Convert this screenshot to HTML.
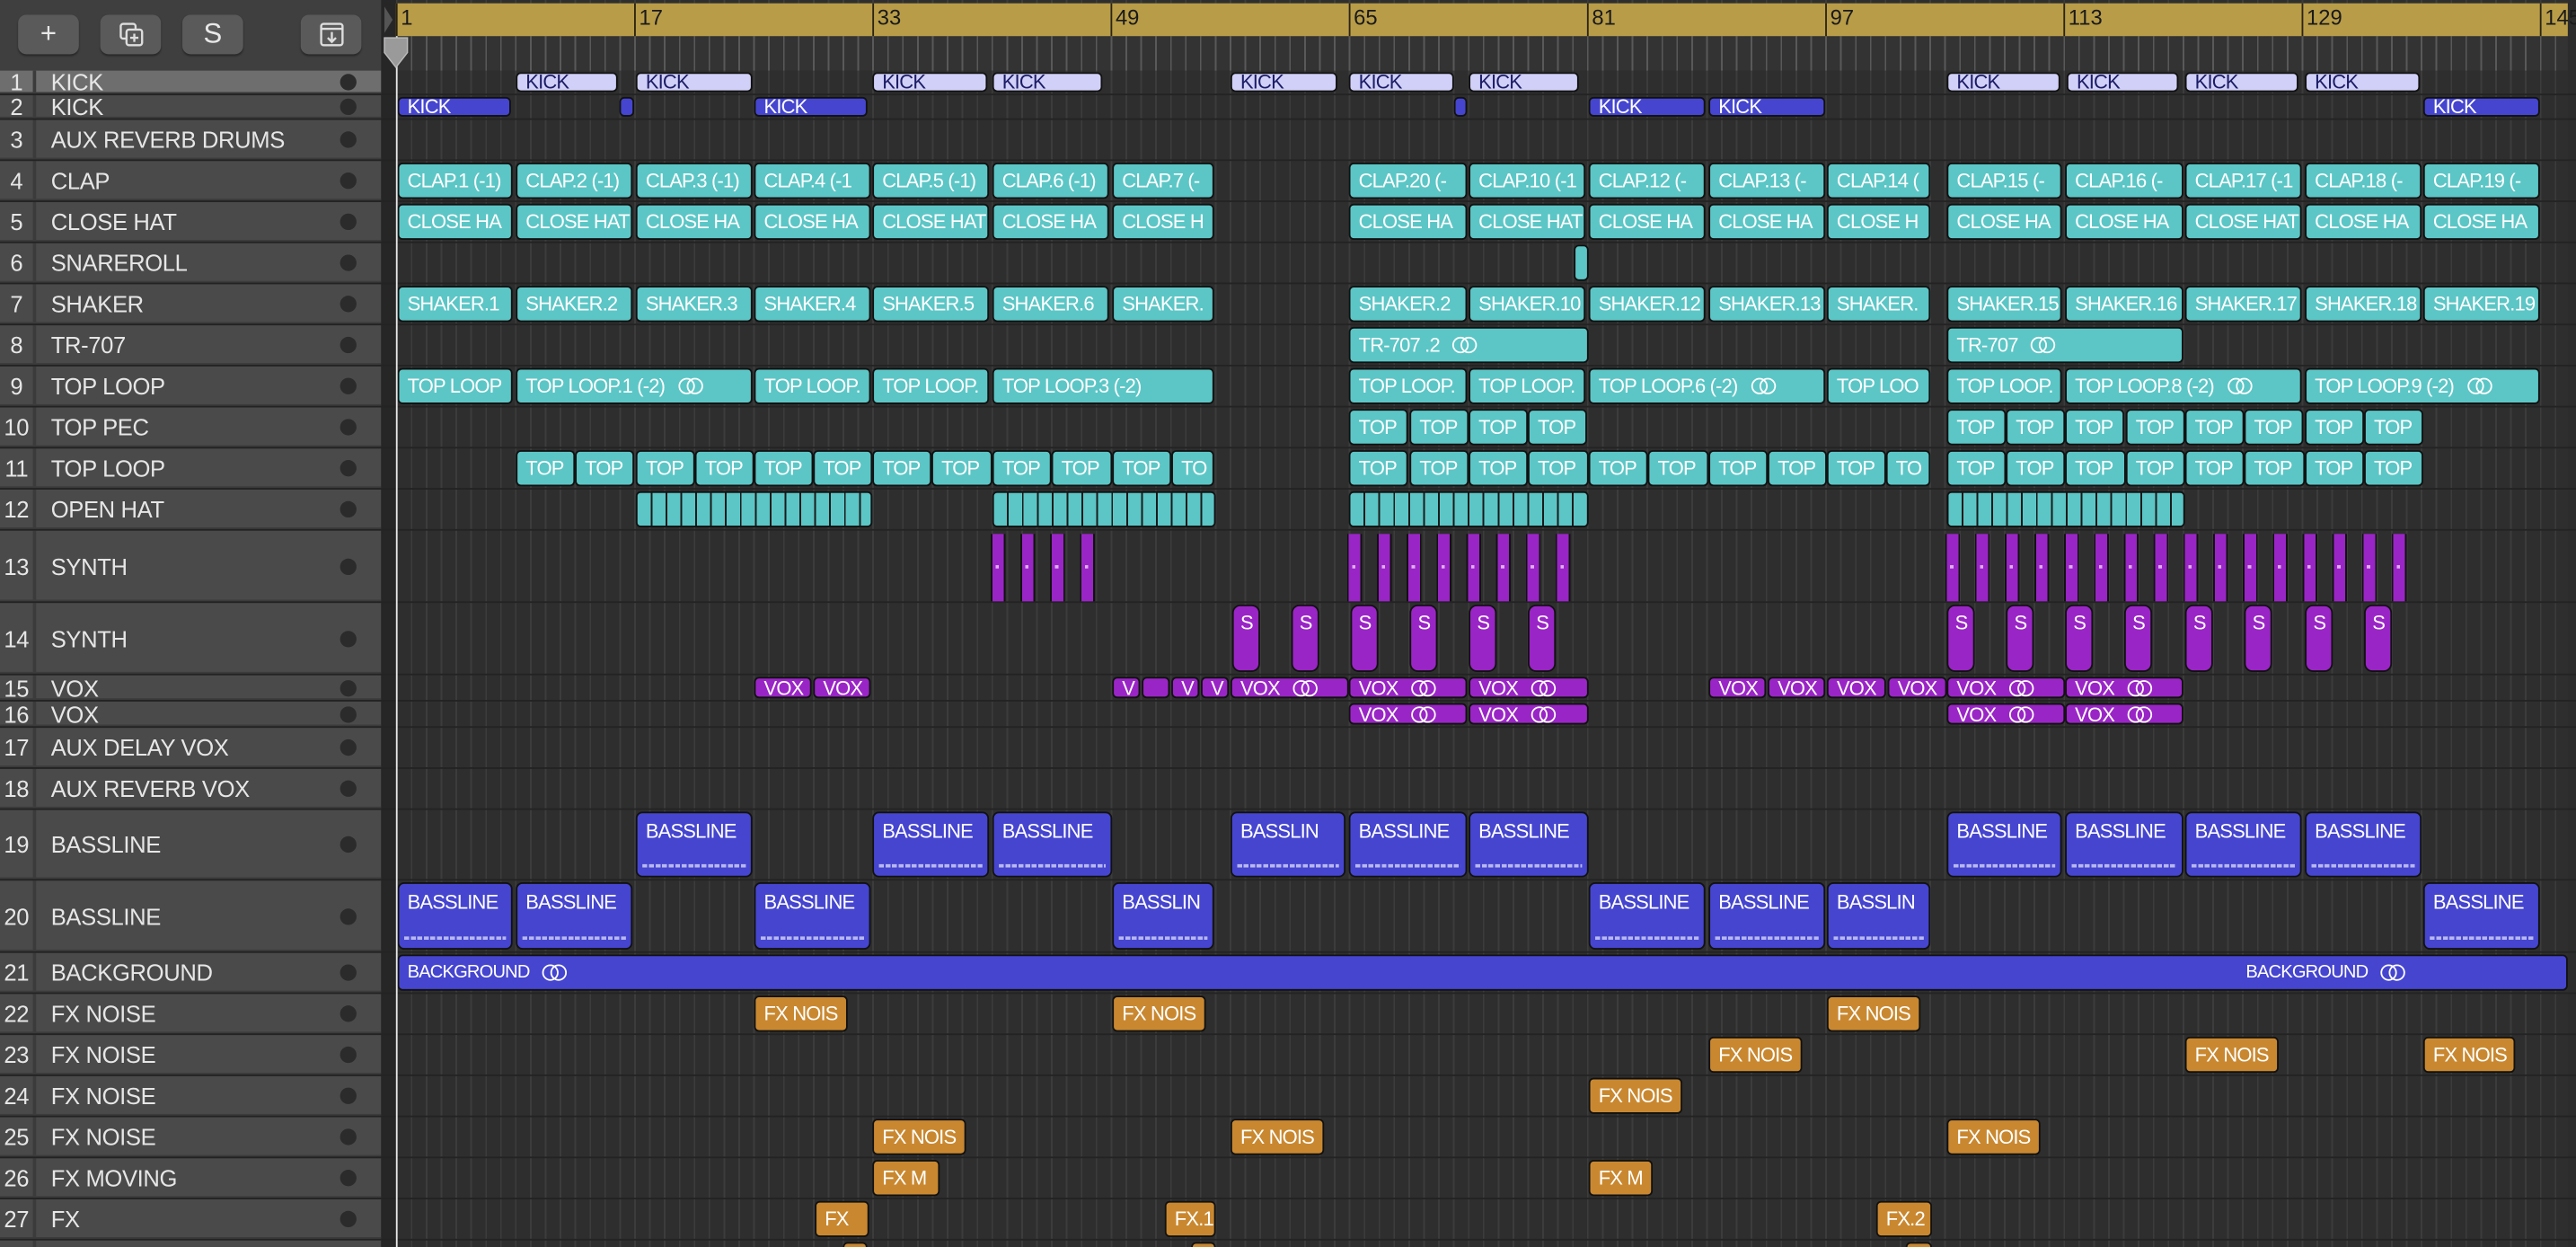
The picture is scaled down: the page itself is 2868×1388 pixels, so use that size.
<!DOCTYPE html>
<html><head><meta charset="utf-8"><style>
html,body{margin:0;padding:0;width:2868px;height:1388px;overflow:hidden;background:#2b2b2b}
#s{position:absolute;left:0;top:0;width:1568px;height:759px;transform:scale(1.82908,1.8287);transform-origin:0 0;font-family:"Liberation Sans",sans-serif;overflow:hidden;background:#2c2c2c}
#left{position:absolute;left:0;top:0;width:232px;height:759px;background:#4a4a4a}
#lhead{position:absolute;left:0;top:0;width:232px;height:43px;background:#3f3f3f}
.btn{position:absolute;top:9px;height:24px;width:37px;background:#5a5a5a;border-radius:5px;box-shadow:0 1px 1px #2a2a2a;color:#e8e8e8;text-align:center;font-size:17px;line-height:24px}
.tr{position:absolute;left:0;width:232px;border-bottom:2px solid #3b3b3b;box-sizing:border-box;color:#e6e6e6;font-size:14px;letter-spacing:-0.2px}
.tr .n{position:absolute;left:0;width:22px;text-align:center;border-right:2px solid #3b3b3b;height:100%;box-sizing:border-box}
.tr .nm{position:absolute;left:31px}
.tr .d{position:absolute;left:207px;width:10px;height:10px;border-radius:50%;background:#2b2b2b}
#gap{position:absolute;left:232px;top:0;width:9px;height:759px;background:#262626}
#tl{position:absolute;left:241px;top:0;width:1322px;height:759px;background-color:#2e2e2e;background-image:repeating-linear-gradient(90deg,#3c3c3c 0 1px,transparent 1px 9.0625px)}
#ruler{position:absolute;left:241px;top:2px;width:1322px;height:20px;background:#b89c48}
.rn{position:absolute;top:0;height:20px;border-left:1px solid #2a2410;font-size:13px;color:#1a1a1a;padding-left:2px;line-height:17px}
#sub{position:absolute;left:241px;top:22px;width:1322px;height:21px;background-color:#333;background-image:repeating-linear-gradient(90deg,#595959 0 1px,transparent 1px 9.0625px)}
.row{position:absolute;left:0;width:1568px;border-bottom:1px solid #232323;box-sizing:border-box}
.c{position:absolute;top:1px;bottom:1px;border:1px solid #111;border-radius:3px;box-sizing:border-box;font-size:12px;padding-left:5px;white-space:nowrap;overflow:hidden;color:#fff;display:flex;align-items:center;letter-spacing:-0.45px;line-height:normal !important}
.t{background:#5cc6c6}.k{background:#d1d0f8;color:#1c1c66}.b{background:#4545d0}.p{background:#9a25c6}.o{background:#c98830}
.bl{align-items:flex-start;padding-top:4px;border-radius:4px}
.sc{align-items:flex-start;padding-top:3px;border-radius:5px;padding-left:4px}
.lk{display:inline-block;position:relative;width:15px;height:10px;margin-left:8px;font-size:0;flex:none}
.lk::before,.lk::after{content:"";position:absolute;top:0;width:8px;height:8px;border:1.2px solid #fff;border-radius:50%}
.lk::before{left:0}.lk::after{left:5px}
.dash{position:absolute;left:3px;right:3px;bottom:5px;height:2px;background:repeating-linear-gradient(90deg,#b8b8f0 0 3px,transparent 3px 4px)}
</style></head><body><div id="s">
<div id="left">
<div id="lhead">
<div class="btn" style="left:11px">+</div>
<div class="btn" style="left:61px"><svg width="16" height="16" viewBox="0 0 16 16" style="margin-top:4px"><rect x="1.5" y="1.5" width="9" height="9" rx="1.5" fill="none" stroke="#ddd" stroke-width="1.3"/><rect x="5" y="5" width="9.5" height="9.5" rx="1.5" fill="#5a5a5a" stroke="#ddd" stroke-width="1.3"/><path d="M9.75 7.5v5M7.25 10h5" stroke="#ddd" stroke-width="1.3"/></svg></div>
<div class="btn" style="left:111px">S</div>
<div class="btn" style="left:183px"><svg width="16" height="16" viewBox="0 0 16 16" style="margin-top:4px"><rect x="1.5" y="1.5" width="13" height="13" rx="1.5" fill="none" stroke="#ddd" stroke-width="1.3"/><path d="M1.5 4.5h13M8 6.5v6M5.5 10l2.5 2.5 2.5-2.5" fill="none" stroke="#ddd" stroke-width="1.3"/></svg></div>
</div>
<div class="tr" style="top:43px;height:15px;line-height:15px;background:#6e6e6e"><span class="n">1</span><span class="nm">KICK</span><span class="d" style="top:2px"></span></div>
<div class="tr" style="top:58px;height:15px;line-height:15px"><span class="n">2</span><span class="nm">KICK</span><span class="d" style="top:2px"></span></div>
<div class="tr" style="top:73px;height:25px;line-height:25px"><span class="n">3</span><span class="nm">AUX REVERB DRUMS</span><span class="d" style="top:7px"></span></div>
<div class="tr" style="top:98px;height:25px;line-height:25px"><span class="n">4</span><span class="nm">CLAP</span><span class="d" style="top:7px"></span></div>
<div class="tr" style="top:123px;height:25px;line-height:25px"><span class="n">5</span><span class="nm">CLOSE HAT</span><span class="d" style="top:7px"></span></div>
<div class="tr" style="top:148px;height:25px;line-height:25px"><span class="n">6</span><span class="nm">SNAREROLL</span><span class="d" style="top:7px"></span></div>
<div class="tr" style="top:173px;height:25px;line-height:25px"><span class="n">7</span><span class="nm">SHAKER</span><span class="d" style="top:7px"></span></div>
<div class="tr" style="top:198px;height:25px;line-height:25px"><span class="n">8</span><span class="nm">TR-707</span><span class="d" style="top:7px"></span></div>
<div class="tr" style="top:223px;height:25px;line-height:25px"><span class="n">9</span><span class="nm">TOP LOOP</span><span class="d" style="top:7px"></span></div>
<div class="tr" style="top:248px;height:25px;line-height:25px"><span class="n">10</span><span class="nm">TOP PEC</span><span class="d" style="top:7px"></span></div>
<div class="tr" style="top:273px;height:25px;line-height:25px"><span class="n">11</span><span class="nm">TOP LOOP</span><span class="d" style="top:7px"></span></div>
<div class="tr" style="top:298px;height:25px;line-height:25px"><span class="n">12</span><span class="nm">OPEN HAT</span><span class="d" style="top:7px"></span></div>
<div class="tr" style="top:323px;height:44px;line-height:44px"><span class="n">13</span><span class="nm">SYNTH</span><span class="d" style="top:17px"></span></div>
<div class="tr" style="top:367px;height:44px;line-height:44px"><span class="n">14</span><span class="nm">SYNTH</span><span class="d" style="top:17px"></span></div>
<div class="tr" style="top:411px;height:16px;line-height:16px"><span class="n">15</span><span class="nm">VOX</span><span class="d" style="top:3px"></span></div>
<div class="tr" style="top:427px;height:16px;line-height:16px"><span class="n">16</span><span class="nm">VOX</span><span class="d" style="top:3px"></span></div>
<div class="tr" style="top:443px;height:25px;line-height:25px"><span class="n">17</span><span class="nm">AUX DELAY VOX</span><span class="d" style="top:7px"></span></div>
<div class="tr" style="top:468px;height:25px;line-height:25px"><span class="n">18</span><span class="nm">AUX REVERB VOX</span><span class="d" style="top:7px"></span></div>
<div class="tr" style="top:493px;height:43px;line-height:43px"><span class="n">19</span><span class="nm">BASSLINE</span><span class="d" style="top:16px"></span></div>
<div class="tr" style="top:536px;height:44px;line-height:44px"><span class="n">20</span><span class="nm">BASSLINE</span><span class="d" style="top:17px"></span></div>
<div class="tr" style="top:580px;height:25px;line-height:25px"><span class="n">21</span><span class="nm">BACKGROUND</span><span class="d" style="top:7px"></span></div>
<div class="tr" style="top:605px;height:25px;line-height:25px"><span class="n">22</span><span class="nm">FX NOISE</span><span class="d" style="top:7px"></span></div>
<div class="tr" style="top:630px;height:25px;line-height:25px"><span class="n">23</span><span class="nm">FX NOISE</span><span class="d" style="top:7px"></span></div>
<div class="tr" style="top:655px;height:25px;line-height:25px"><span class="n">24</span><span class="nm">FX NOISE</span><span class="d" style="top:7px"></span></div>
<div class="tr" style="top:680px;height:25px;line-height:25px"><span class="n">25</span><span class="nm">FX NOISE</span><span class="d" style="top:7px"></span></div>
<div class="tr" style="top:705px;height:25px;line-height:25px"><span class="n">26</span><span class="nm">FX MOVING</span><span class="d" style="top:7px"></span></div>
<div class="tr" style="top:730px;height:25px;line-height:25px"><span class="n">27</span><span class="nm">FX</span><span class="d" style="top:7px"></span></div>
<div class="tr" style="top:755px;height:25px;line-height:25px"><span class="n">28</span><span class="nm"></span></div>
</div>
<div id="gap"></div>
<div id="tl"></div>
<div id="sub"></div>
<div id="ruler">
<div class="rn" style="left:0">1</div><div class="rn" style="left:145px">17</div><div class="rn" style="left:290px">33</div><div class="rn" style="left:435px">49</div><div class="rn" style="left:580px">65</div><div class="rn" style="left:725px">81</div><div class="rn" style="left:870px">97</div><div class="rn" style="left:1015px">113</div><div class="rn" style="left:1160px">129</div><div class="rn" style="left:1305px">145</div>
</div>

<div class="row" style="top:43px;height:15px"><div class="c k" style="left:314px;width:62px">KICK</div><div class="c k" style="left:387px;width:71px">KICK</div><div class="c k" style="left:531px;width:70px">KICK</div><div class="c k" style="left:604px;width:67px">KICK</div><div class="c k" style="left:749px;width:65px">KICK</div><div class="c k" style="left:821px;width:64px">KICK</div><div class="c k" style="left:894px;width:67px">KICK</div><div class="c k" style="left:1185px;width:69px">KICK</div><div class="c k" style="left:1258px;width:68px">KICK</div><div class="c k" style="left:1330px;width:69px">KICK</div><div class="c k" style="left:1403px;width:70px">KICK</div></div>
<div class="row" style="top:58px;height:15px"><div class="c b" style="left:242px;width:69px">KICK</div><div class="c b" style="left:377px;width:9px"></div><div class="c b" style="left:459px;width:69px">KICK</div><div class="c b" style="left:885px;width:8px"></div><div class="c b" style="left:967px;width:71px">KICK</div><div class="c b" style="left:1040px;width:71px">KICK</div><div class="c b" style="left:1475px;width:71px">KICK</div></div>
<div class="row" style="top:73px;height:25px"></div>
<div class="row" style="top:98px;height:25px"><div class="c t" style="left:242px;width:70px">CLAP.1 (-1)</div><div class="c t" style="left:314px;width:71px">CLAP.2 (-1)</div><div class="c t" style="left:387px;width:71px">CLAP.3 (-1)</div><div class="c t" style="left:459px;width:71px">CLAP.4 (-1</div><div class="c t" style="left:531px;width:71px">CLAP.5 (-1)</div><div class="c t" style="left:604px;width:71px">CLAP.6 (-1)</div><div class="c t" style="left:677px;width:62px">CLAP.7 (-</div><div class="c t" style="left:821px;width:72px">CLAP.20 (-</div><div class="c t" style="left:894px;width:71px">CLAP.10 (-1</div><div class="c t" style="left:967px;width:71px">CLAP.12 (-</div><div class="c t" style="left:1040px;width:71px">CLAP.13 (-</div><div class="c t" style="left:1112px;width:63px">CLAP.14 (</div><div class="c t" style="left:1185px;width:70px">CLAP.15 (-</div><div class="c t" style="left:1257px;width:72px">CLAP.16 (-</div><div class="c t" style="left:1330px;width:71px">CLAP.17 (-1</div><div class="c t" style="left:1403px;width:71px">CLAP.18 (-</div><div class="c t" style="left:1475px;width:71px">CLAP.19 (-</div></div>
<div class="row" style="top:123px;height:25px"><div class="c t" style="left:242px;width:70px">CLOSE HA</div><div class="c t" style="left:314px;width:71px">CLOSE HAT</div><div class="c t" style="left:387px;width:71px">CLOSE HA</div><div class="c t" style="left:459px;width:71px">CLOSE HA</div><div class="c t" style="left:531px;width:71px">CLOSE HAT</div><div class="c t" style="left:604px;width:71px">CLOSE HA</div><div class="c t" style="left:677px;width:62px">CLOSE H</div><div class="c t" style="left:821px;width:72px">CLOSE HA</div><div class="c t" style="left:894px;width:71px">CLOSE HAT</div><div class="c t" style="left:967px;width:71px">CLOSE HA</div><div class="c t" style="left:1040px;width:71px">CLOSE HA</div><div class="c t" style="left:1112px;width:63px">CLOSE H</div><div class="c t" style="left:1185px;width:70px">CLOSE HA</div><div class="c t" style="left:1257px;width:72px">CLOSE HA</div><div class="c t" style="left:1330px;width:71px">CLOSE HAT</div><div class="c t" style="left:1403px;width:71px">CLOSE HA</div><div class="c t" style="left:1475px;width:71px">CLOSE HA</div></div>
<div class="row" style="top:148px;height:25px"><div class="c t" style="left:958px;width:9px"></div></div>
<div class="row" style="top:173px;height:25px"><div class="c t" style="left:242px;width:70px">SHAKER.1</div><div class="c t" style="left:314px;width:71px">SHAKER.2</div><div class="c t" style="left:387px;width:71px">SHAKER.3</div><div class="c t" style="left:459px;width:71px">SHAKER.4</div><div class="c t" style="left:531px;width:71px">SHAKER.5</div><div class="c t" style="left:604px;width:71px">SHAKER.6</div><div class="c t" style="left:677px;width:62px">SHAKER.</div><div class="c t" style="left:821px;width:72px">SHAKER.2</div><div class="c t" style="left:894px;width:71px">SHAKER.10</div><div class="c t" style="left:967px;width:71px">SHAKER.12</div><div class="c t" style="left:1040px;width:71px">SHAKER.13</div><div class="c t" style="left:1112px;width:63px">SHAKER.</div><div class="c t" style="left:1185px;width:70px">SHAKER.15</div><div class="c t" style="left:1257px;width:72px">SHAKER.16</div><div class="c t" style="left:1330px;width:71px">SHAKER.17</div><div class="c t" style="left:1403px;width:71px">SHAKER.18</div><div class="c t" style="left:1475px;width:71px">SHAKER.19</div></div>
<div class="row" style="top:198px;height:25px"><div class="c t" style="left:821px;width:146px">TR-707 .2 <span class="lk">○○</span></div><div class="c t" style="left:1185px;width:144px">TR-707 <span class="lk">○○</span></div></div>
<div class="row" style="top:223px;height:25px"><div class="c t" style="left:242px;width:70px">TOP LOOP</div><div class="c t" style="left:314px;width:144px">TOP LOOP.1 (-2) <span class="lk">○○</span></div><div class="c t" style="left:459px;width:71px">TOP LOOP.</div><div class="c t" style="left:531px;width:71px">TOP LOOP.</div><div class="c t" style="left:604px;width:135px">TOP LOOP.3 (-2)</div><div class="c t" style="left:821px;width:72px">TOP LOOP.</div><div class="c t" style="left:894px;width:71px">TOP LOOP.</div><div class="c t" style="left:967px;width:144px">TOP LOOP.6 (-2) <span class="lk">○○</span></div><div class="c t" style="left:1112px;width:63px">TOP LOO</div><div class="c t" style="left:1185px;width:70px">TOP LOOP.</div><div class="c t" style="left:1257px;width:144px">TOP LOOP.8 (-2) <span class="lk">○○</span></div><div class="c t" style="left:1403px;width:143px">TOP LOOP.9 (-2) <span class="lk">○○</span></div></div>
<div class="row" style="top:248px;height:25px"><div class="c t" style="left:821px;width:36px">TOP</div><div class="c t" style="left:858px;width:36px">TOP</div><div class="c t" style="left:894px;width:36px">TOP</div><div class="c t" style="left:930px;width:36px">TOP</div><div class="c t" style="left:1185px;width:36px">TOP</div><div class="c t" style="left:1221px;width:36px">TOP</div><div class="c t" style="left:1257px;width:36px">TOP</div><div class="c t" style="left:1294px;width:36px">TOP</div><div class="c t" style="left:1330px;width:36px">TOP</div><div class="c t" style="left:1366px;width:36px">TOP</div><div class="c t" style="left:1403px;width:36px">TOP</div><div class="c t" style="left:1439px;width:36px">TOP</div></div>
<div class="row" style="top:273px;height:25px"><div class="c t" style="left:314px;width:36px">TOP</div><div class="c t" style="left:350px;width:36px">TOP</div><div class="c t" style="left:387px;width:36px">TOP</div><div class="c t" style="left:423px;width:36px">TOP</div><div class="c t" style="left:459px;width:36px">TOP</div><div class="c t" style="left:495px;width:36px">TOP</div><div class="c t" style="left:531px;width:36px">TOP</div><div class="c t" style="left:567px;width:37px">TOP</div><div class="c t" style="left:604px;width:36px">TOP</div><div class="c t" style="left:640px;width:37px">TOP</div><div class="c t" style="left:677px;width:36px">TOP</div><div class="c t" style="left:713px;width:26px">TO</div><div class="c t" style="left:821px;width:36px">TOP</div><div class="c t" style="left:858px;width:36px">TOP</div><div class="c t" style="left:894px;width:36px">TOP</div><div class="c t" style="left:930px;width:37px">TOP</div><div class="c t" style="left:967px;width:36px">TOP</div><div class="c t" style="left:1003px;width:37px">TOP</div><div class="c t" style="left:1040px;width:36px">TOP</div><div class="c t" style="left:1076px;width:36px">TOP</div><div class="c t" style="left:1112px;width:36px">TOP</div><div class="c t" style="left:1148px;width:27px">TO</div><div class="c t" style="left:1185px;width:36px">TOP</div><div class="c t" style="left:1221px;width:36px">TOP</div><div class="c t" style="left:1257px;width:37px">TOP</div><div class="c t" style="left:1294px;width:36px">TOP</div><div class="c t" style="left:1330px;width:36px">TOP</div><div class="c t" style="left:1366px;width:37px">TOP</div><div class="c t" style="left:1403px;width:36px">TOP</div><div class="c t" style="left:1439px;width:36px">TOP</div></div>
<div class="row" style="top:298px;height:25px"><div class="c t" style="left:387px;width:144px;padding:0;background:repeating-linear-gradient(90deg,#5cc6c6 0 8px,#1a1a1a 8px 9.0625px)"></div><div class="c t" style="left:604px;width:136px;padding:0;background:repeating-linear-gradient(90deg,#5cc6c6 0 8px,#1a1a1a 8px 9.0625px)"></div><div class="c t" style="left:821px;width:146px;padding:0;background:repeating-linear-gradient(90deg,#5cc6c6 0 8px,#1a1a1a 8px 9.0625px)"></div><div class="c t" style="left:1185px;width:145px;padding:0;background:repeating-linear-gradient(90deg,#5cc6c6 0 8px,#1a1a1a 8px 9.0625px)"></div></div>
<div class="row" style="top:323px;height:44px"><div style="position:absolute;left:603px;top:2px;height:41px;width:66px;background:repeating-linear-gradient(90deg,#111 0 1px,#9a25c6 1px 8px,#111 8px 9px,transparent 9px 18.125px)"></div><div style="position:absolute;left:820px;top:2px;height:41px;width:138px;background:repeating-linear-gradient(90deg,#111 0 1px,#9a25c6 1px 8px,#111 8px 9px,transparent 9px 18.125px)"></div><div style="position:absolute;left:1184px;top:2px;height:41px;width:283px;background:repeating-linear-gradient(90deg,#111 0 1px,#9a25c6 1px 8px,#111 8px 9px,transparent 9px 18.125px)"></div>
<div style="position:absolute;left:603px;top:21px;height:2px;width:66px;background:repeating-linear-gradient(90deg,transparent 0 3px,#e0b0f0 3px 5px,transparent 5px 18.125px)"></div><div style="position:absolute;left:820px;top:21px;height:2px;width:138px;background:repeating-linear-gradient(90deg,transparent 0 3px,#e0b0f0 3px 5px,transparent 5px 18.125px)"></div><div style="position:absolute;left:1184px;top:21px;height:2px;width:283px;background:repeating-linear-gradient(90deg,transparent 0 3px,#e0b0f0 3px 5px,transparent 5px 18.125px)"></div></div>
<div class="row" style="top:367px;height:44px"><div class="c p sc" style="left:750px;width:17px">S</div><div class="c p sc" style="left:786px;width:17px">S</div><div class="c p sc" style="left:822px;width:17px">S</div><div class="c p sc" style="left:858px;width:17px">S</div><div class="c p sc" style="left:894px;width:17px">S</div><div class="c p sc" style="left:930px;width:17px">S</div><div class="c p sc" style="left:1185px;width:17px">S</div><div class="c p sc" style="left:1221px;width:17px">S</div><div class="c p sc" style="left:1257px;width:17px">S</div><div class="c p sc" style="left:1293px;width:17px">S</div><div class="c p sc" style="left:1330px;width:17px">S</div><div class="c p sc" style="left:1366px;width:17px">S</div><div class="c p sc" style="left:1403px;width:17px">S</div><div class="c p sc" style="left:1439px;width:17px">S</div></div>
<div class="row" style="top:411px;height:16px"><div class="c p" style="left:459px;width:35px">VOX</div><div class="c p" style="left:495px;width:35px">VOX</div><div class="c p" style="left:677px;width:17px">V</div><div class="c p" style="left:695px;width:17px"></div><div class="c p" style="left:713px;width:17px">V</div><div class="c p" style="left:731px;width:17px">V</div><div class="c p" style="left:749px;width:72px">VOX <span class="lk">○○</span></div><div class="c p" style="left:821px;width:72px">VOX <span class="lk">○○</span></div><div class="c p" style="left:894px;width:73px">VOX <span class="lk">○○</span></div><div class="c p" style="left:1040px;width:35px">VOX</div><div class="c p" style="left:1076px;width:35px">VOX</div><div class="c p" style="left:1112px;width:36px">VOX</div><div class="c p" style="left:1149px;width:36px">VOX</div><div class="c p" style="left:1185px;width:72px">VOX <span class="lk">○○</span></div><div class="c p" style="left:1257px;width:72px">VOX <span class="lk">○○</span></div></div>
<div class="row" style="top:427px;height:16px"><div class="c p" style="left:821px;width:72px">VOX <span class="lk">○○</span></div><div class="c p" style="left:894px;width:73px">VOX <span class="lk">○○</span></div><div class="c p" style="left:1185px;width:72px">VOX <span class="lk">○○</span></div><div class="c p" style="left:1257px;width:72px">VOX <span class="lk">○○</span></div></div>
<div class="row" style="top:443px;height:25px"></div>
<div class="row" style="top:468px;height:25px"></div>
<div class="row" style="top:493px;height:43px"><div class="c b bl" style="left:387px;width:71px">BASSLINE<i class="dash"></i></div><div class="c b bl" style="left:531px;width:71px">BASSLINE<i class="dash"></i></div><div class="c b bl" style="left:604px;width:73px">BASSLINE<i class="dash"></i></div><div class="c b bl" style="left:749px;width:70px">BASSLIN<i class="dash"></i></div><div class="c b bl" style="left:821px;width:72px">BASSLINE<i class="dash"></i></div><div class="c b bl" style="left:894px;width:73px">BASSLINE<i class="dash"></i></div><div class="c b bl" style="left:1185px;width:70px">BASSLINE<i class="dash"></i></div><div class="c b bl" style="left:1257px;width:72px">BASSLINE<i class="dash"></i></div><div class="c b bl" style="left:1330px;width:71px">BASSLINE<i class="dash"></i></div><div class="c b bl" style="left:1403px;width:71px">BASSLINE<i class="dash"></i></div></div>
<div class="row" style="top:536px;height:44px"><div class="c b bl" style="left:242px;width:70px">BASSLINE<i class="dash"></i></div><div class="c b bl" style="left:314px;width:71px">BASSLINE<i class="dash"></i></div><div class="c b bl" style="left:459px;width:71px">BASSLINE<i class="dash"></i></div><div class="c b bl" style="left:677px;width:62px">BASSLIN<i class="dash"></i></div><div class="c b bl" style="left:967px;width:71px">BASSLINE<i class="dash"></i></div><div class="c b bl" style="left:1040px;width:71px">BASSLINE<i class="dash"></i></div><div class="c b bl" style="left:1112px;width:63px">BASSLIN<i class="dash"></i></div><div class="c b bl" style="left:1475px;width:71px">BASSLINE<i class="dash"></i></div></div>
<div class="row" style="top:580px;height:25px"><div class="c b" style="left:242px;width:1321px;font-size:11px">BACKGROUND <span class="lk">○○</span><span style="position:absolute;left:1124px;top:0;bottom:0;display:flex;align-items:center">BACKGROUND <span class="lk">○○</span></span></div></div>
<div class="row" style="top:605px;height:25px"><div class="c o" style="left:459px;width:57px">FX NOIS</div><div class="c o" style="left:677px;width:57px">FX NOIS</div><div class="c o" style="left:1112px;width:57px">FX NOIS</div></div>
<div class="row" style="top:630px;height:25px"><div class="c o" style="left:1040px;width:57px">FX NOIS</div><div class="c o" style="left:1330px;width:57px">FX NOIS</div><div class="c o" style="left:1475px;width:56px">FX NOIS</div></div>
<div class="row" style="top:655px;height:25px"><div class="c o" style="left:967px;width:57px">FX NOIS</div></div>
<div class="row" style="top:680px;height:25px"><div class="c o" style="left:531px;width:57px">FX NOIS</div><div class="c o" style="left:749px;width:57px">FX NOIS</div><div class="c o" style="left:1185px;width:57px">FX NOIS</div></div>
<div class="row" style="top:705px;height:25px"><div class="c o" style="left:531px;width:41px">FX M</div><div class="c o" style="left:967px;width:39px">FX M</div></div>
<div class="row" style="top:730px;height:25px"><div class="c o" style="left:496px;width:33px">FX</div><div class="c o" style="left:709px;width:31px">FX.1</div><div class="c o" style="left:1142px;width:34px">FX.2</div></div>
<div class="row" style="top:755px;height:25px"><div class="c o" style="left:513px;width:15px"></div><div class="c o" style="left:725px;width:15px"></div><div class="c o" style="left:1160px;width:16px"></div></div>

<div style="position:absolute;left:241px;top:22px;width:1px;height:737px;background:#e8e8e8"></div>
<svg style="position:absolute;left:232px;top:22px" width="18" height="20" viewBox="0 0 18 20"><path d="M2 1h14v9l-7 9-7-9z" fill="#9a9a9a" stroke="#bbb" stroke-width="0.8"/></svg>
<svg style="position:absolute;left:233px;top:2px" width="8" height="20"><path d="M1 2l5 8-5 8z" fill="#555"/></svg>
</div></body></html>
